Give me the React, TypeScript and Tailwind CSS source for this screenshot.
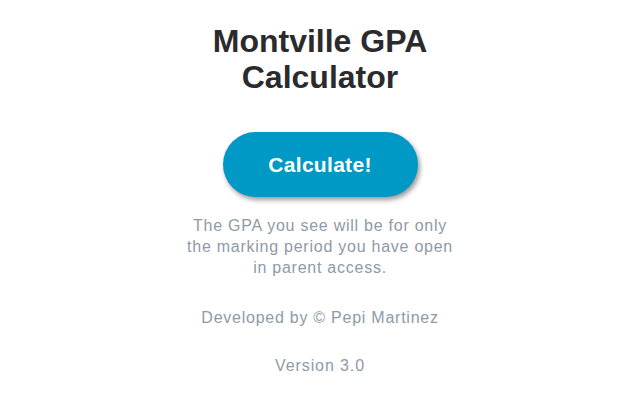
export default function App() {
  return (
    <div className="flex min-h-[400px] w-full flex-col items-center bg-white font-['Liberation_Sans',Arial,sans-serif]">
      <h1 className="mt-[23px] text-center text-[32px] font-bold leading-[36px] text-[#2b2b2e]">
        Montville GPA
        <br />
        Calculator
      </h1>

      <button
        type="button"
        className="mt-[37px] h-[65px] w-[195px] rounded-full bg-[#0099c5] text-[21px] font-bold tracking-[0.3px] text-white shadow-[2px_3px_5px_rgba(0,0,0,0.4)]"
      >
        Calculate!
      </button>

      <p className="mt-[18px] max-w-[275px] text-center text-[16px] leading-[21px] tracking-[0.75px] text-[#8e9aa7]">
        The GPA you see will be for only the marking period you have open in
        parent access.
      </p>

      <p className="mt-[29px] text-center text-[16px] leading-[21px] tracking-[0.75px] text-[#8e9aa7]">
        Developed by © Pepi Martinez
      </p>

      <p className="mt-[27px] text-center text-[16px] leading-[21px] tracking-[0.9px] text-[#8e9aa7]">
        Version 3.0
      </p>
    </div>
  );
}
